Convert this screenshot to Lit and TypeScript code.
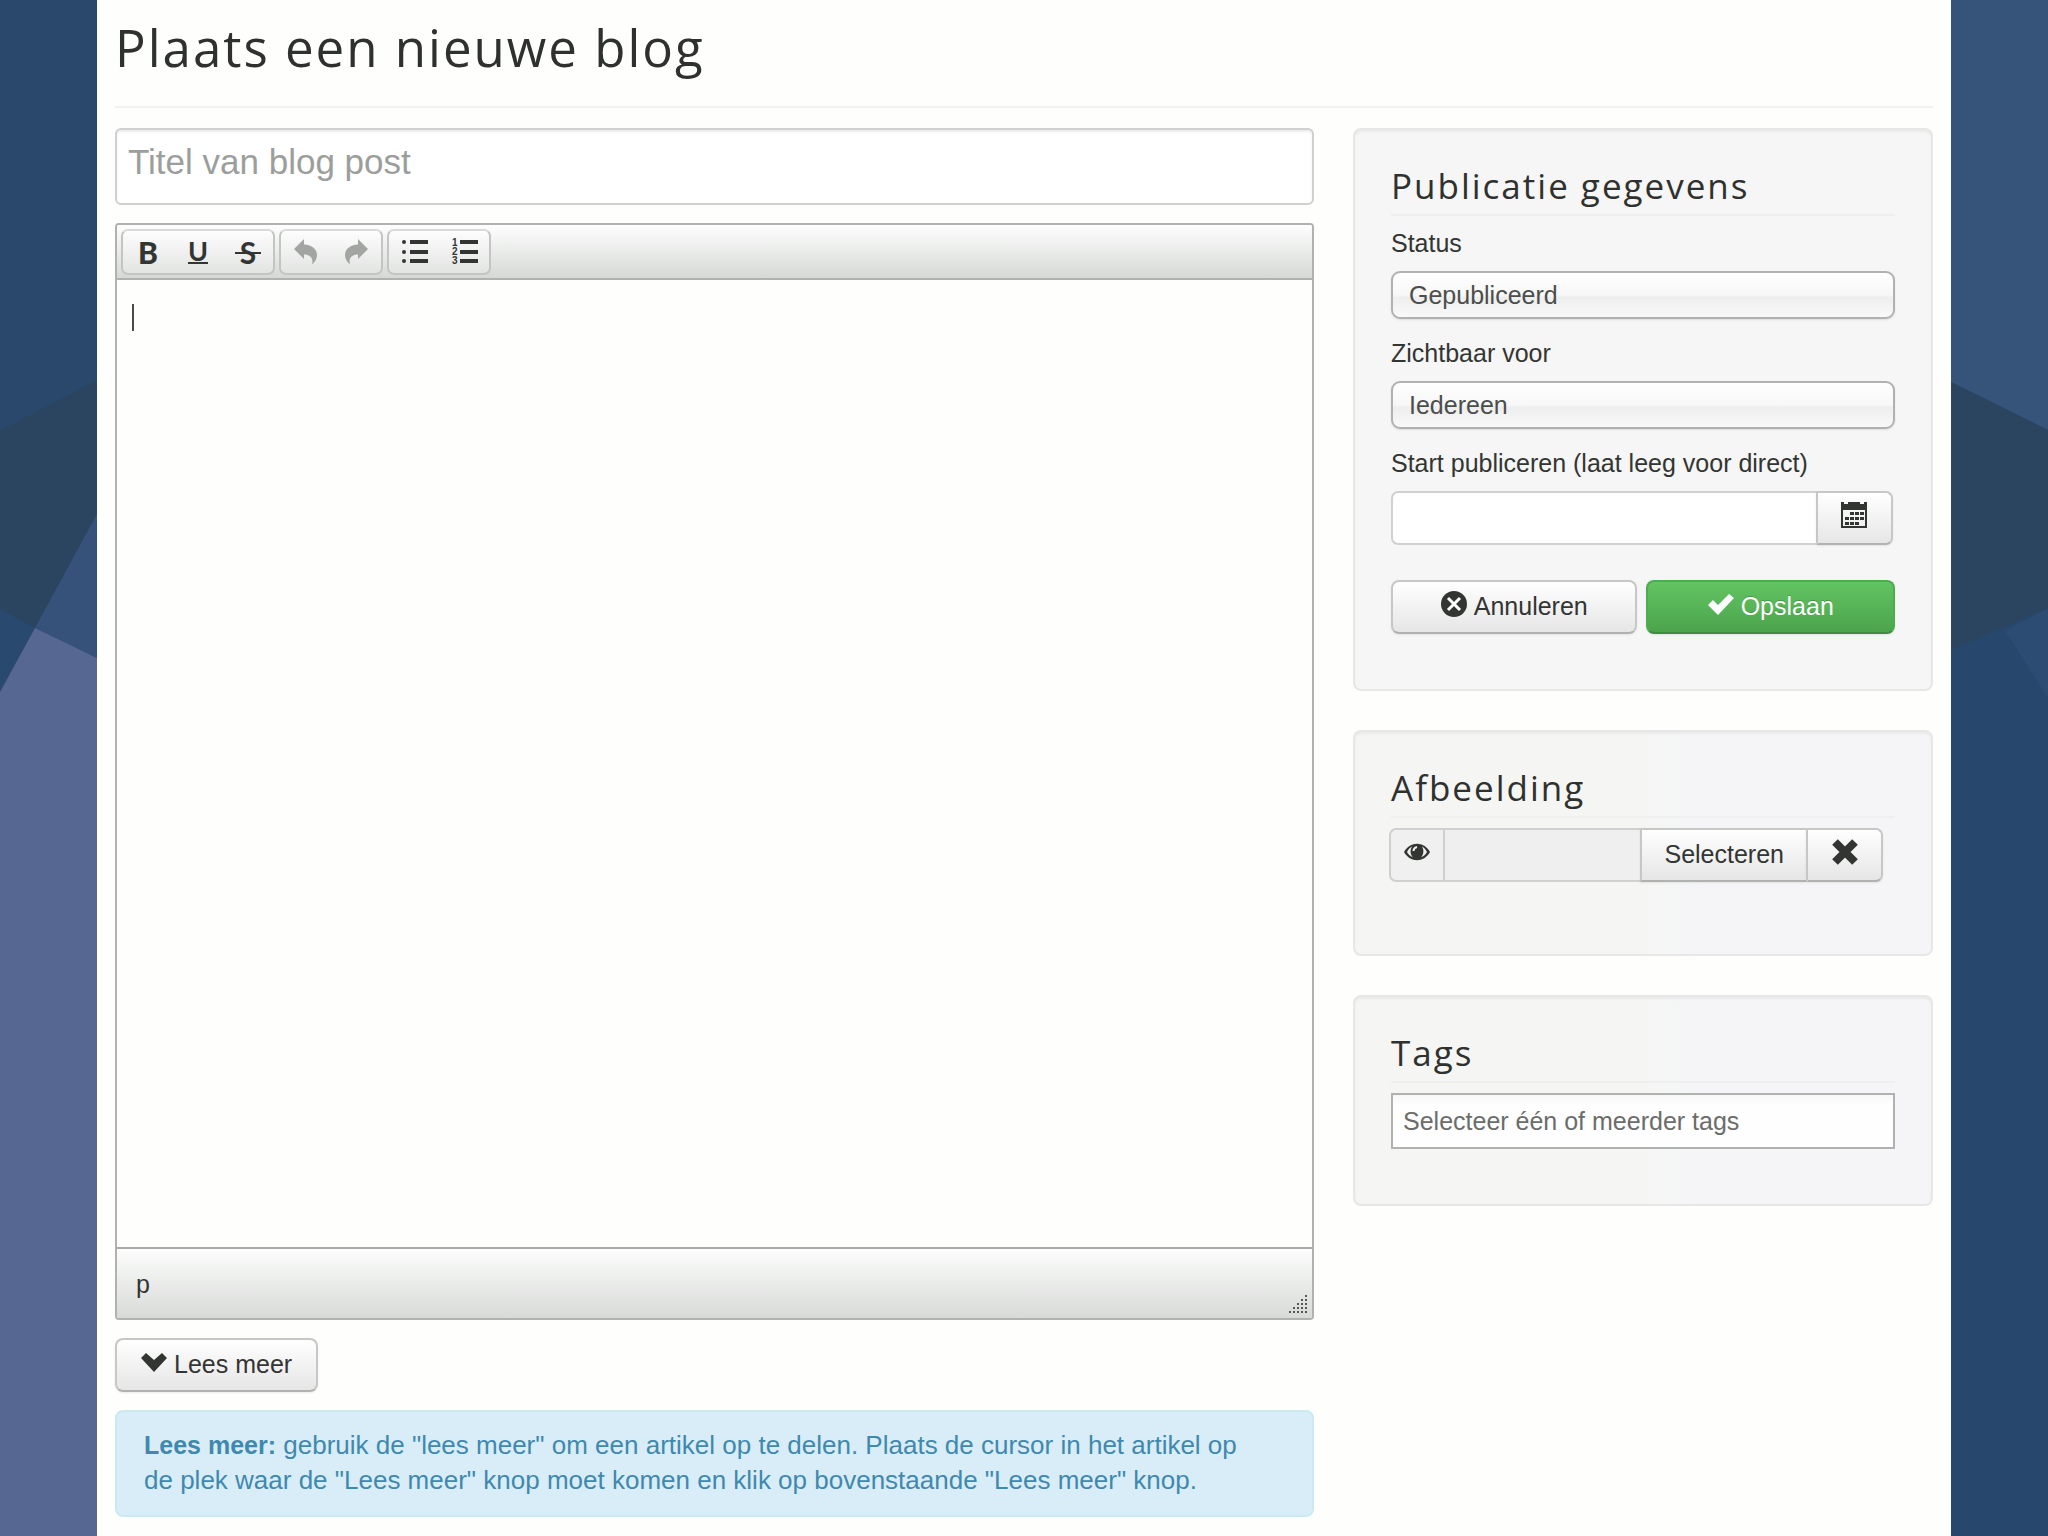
import { LitElement, html, css, svg } from "lit";
import { customElement } from "lit/decorators.js";

const icon = (size: number, body: unknown) => html`
  <svg class="icon" width=${size} height=${size} viewBox="0 0 ${size} ${size}" aria-hidden="true">${body}</svg>
`;

const undoIcon = icon(28, svg`
  <path fill="#a3a5a3" d="M2 11 L12 1 V6.500 C20 7 25 11 25 17 C25 21 23 24 20 26.500 C21.500 21 19 16.500 12 16.500 V21 Z"/>`);
const redoIcon = icon(28, svg`
  <path fill="#a3a5a3" d="M26 11 L16 1 V6.500 C8 7 3 11 3 17 C3 21 5 24 8 26.500 C6.500 21 9 16.500 16 16.500 V21 Z"/>`);
const bulletsIcon = icon(28, svg`
  <g fill="#333533">
    <rect x="10" y="2" width="18" height="4"/><rect x="10" y="12" width="18" height="4"/><rect x="10" y="21" width="18" height="4"/>
    <circle cx="4" cy="4" r="2"/><circle cx="4" cy="14" r="2"/><circle cx="4" cy="23" r="2"/>
  </g>`);
const numbersIcon = icon(28, svg`
  <g fill="#333533">
    <rect x="10" y="2" width="18" height="4"/><rect x="10" y="12" width="18" height="4"/><rect x="10" y="21" width="18" height="4"/>
    <g font-family="Liberation Sans, sans-serif" font-size="10" font-weight="bold">
      <text x="2" y="8">1</text><text x="2" y="17">2</text><text x="2" y="26">3</text>
    </g>
  </g>`);
const gripIcon = icon(20, svg`
  <g fill="#555755">
    ${[0, 1, 2, 3, 4].map((row) =>
      Array.from({ length: row + 1 }, (_, i) => svg`<rect x=${17 - i * 4} y=${1 + row * 4} width="2" height="2"/>`)
    )}
  </g>`);
const chevronIcon = icon(26, svg`
  <path fill="#333533" d="M0 9 L5 4 L13 11 L21 4 L26 9 L13 23 Z"/>`);
const calendarIcon = icon(26, svg`
  <path fill="#333533" fill-rule="evenodd" d="M0 0 H3 V2 H7 V0 H19 V2 H23 V0 H26 V26 H0 Z M2 8 V24 H24 V8 Z"/>
  <g fill="#333533">
    ${[[9, 10], [14, 10], [19, 10], [4, 15], [9, 15], [14, 15], [19, 15], [4, 20], [9, 20], [14, 20]].map(
      ([x, y]) => svg`<rect x=${x} y=${y} width="4" height="3"/>`
    )}
  </g>`);
const cancelIcon = icon(26, svg`
  <circle cx="13" cy="13" r="13" fill="#333533"/>
  <path d="M7 7 L19 19 M19 7 L7 19" stroke="#fff" stroke-width="3" fill="none"/>`);
const checkIcon = icon(26, svg`
  <path fill="#fff" d="M0 14 L5 9 L10 14 L21 3 L26 7 L10 24 Z"/>`);
const eyeIcon = icon(26, svg`
  <path fill="#333533" d="M0 13 C6 2 20 2 26 13 C20 24 6 24 0 13 Z"/>
  <path fill="#eef0ee" d="M3 13 C5 9 7 8 8 7.500 C6 11 6 15 9 18.500 C6 17 4 15 3 13 Z M23 13 C21 9 19 8 18 7.500 C20 11 20 15 17 18.500 C20 17 22 15 23 13 Z"/>
  <path d="M9.500 12 C9.500 9.500 11 8.500 13 8" stroke="#eef0ee" stroke-width="2" fill="none"/>`);
const crossIcon = icon(28, svg`
  <path d="M4 4 L24 24 M24 4 L4 24" stroke="#333533" stroke-width="8" fill="none"/>`);

@customElement("app-root")
export class AppRoot extends LitElement {
  static styles = css`
    :host {
      display: block;
      font-family: "Liberation Sans", Arial, sans-serif;
      font-size: 25px;
      line-height: 35px;
      color: #333533;
    }
    * { box-sizing: border-box; }
    .page {
      display: grid;
      grid-template-columns: 97px minmax(0, 1fr) 97px;
      min-height: 100vh;
      background: #fefffd;
    }
    .side { display: block; width: 100%; height: 1536px; min-height: 100%; }
    .sheet { padding: 12px 18px 18px; }
    h1, h2 {
      margin: 0;
      font-family: "Open Sans", sans-serif;
      font-weight: 500;
      letter-spacing: 2px;
      color: #2f312f;
    }
    h1 {
      font-size: 51px;
      line-height: 70px;
      padding-bottom: 24px;
      margin-bottom: 20px;
      border-bottom: 2px solid #f1f2f1;
    }
    h2 {
      font-size: 35px;
      line-height: 40px;
      padding-bottom: 8px;
      margin-bottom: 10px;
      border-bottom: 2px solid #eeefee;
    }
    .columns {
      display: grid;
      grid-template-columns: 1199fr 580fr;
      column-gap: 39px;
      align-items: start;
    }
    .main { display: flex; flex-direction: column; align-items: stretch; gap: 18px; min-width: 0; }
    .aside { display: flex; flex-direction: column; gap: 39px; min-width: 0; }
    input, select, textarea, button {
      font: inherit;
      color: inherit;
      margin: 0;
      border-radius: 0;
      outline: none;
      min-width: 0;
    }
    .title {
      height: 77px;
      padding: 2px 11px 12px;
      font-size: 35px;
      border: 2px solid #cfd0cf;
      border-radius: 6px;
      background: #fefffe;
      box-shadow: inset 0 2px 2px #ececec;
    }
    .title::placeholder { color: #9c9e9c; opacity: 1; }

    .editor { border: 2px solid #b0b2b0; border-radius: 4px; overflow: hidden; }
    .toolbar {
      display: flex;
      gap: 4px;
      padding: 4px 4px 3px;
      border-bottom: 2px solid #b0b2b0;
      background: linear-gradient(#fdfefd, #d6d8d6);
    }
    .group {
      display: flex;
      height: 46px;
      border: 2px solid #c3c5c3;
      border-top-color: #d9dad9;
      border-radius: 7px;
      background: linear-gradient(#fdfdfd, #e2e4e2);
    }
    .tool {
      display: flex;
      align-items: center;
      justify-content: center;
      width: 50px;
      padding: 0;
      border: 0;
      background: none;
    }
    .icon { display: block; flex: none; }
    .glyph {
      position: relative;
      font-family: Lato, sans-serif;
      font-size: 30px;
      line-height: 28px;
      font-weight: 700;
    }
    .bold { font-weight: 900; }
    .under { line-height: 22px; font-size: 27px; border-bottom: 2px solid #333533; }
    .strike::after {
      content: "";
      position: absolute;
      left: -5px;
      right: -5px;
      top: 14px;
      height: 2px;
      background: #333533;
    }
    .body { position: relative; display: flex; }
    .text {
      flex: 1;
      height: 967px;
      padding: 20px 16px;
      border: 0;
      resize: none;
      background: #fefffd;
      caret-color: transparent;
    }
    .caret { position: absolute; left: 15px; top: 24px; width: 2px; height: 27px; background: #4a4c4a; }
    .footer {
      display: flex;
      align-items: center;
      justify-content: space-between;
      height: 71px;
      padding: 2px 4px 0 19px;
      border-top: 2px solid #a9aba9;
      background: linear-gradient(#fcfdfc, #d8dad8);
    }
    .grip { align-self: flex-end; padding-bottom: 4px; }

    .btn {
      display: flex;
      align-items: center;
      justify-content: center;
      gap: 7px;
      height: 54px;
      padding: 0 22px 2px;
      border: 2px solid #c6c8c6;
      border-bottom-color: #b0b2b0;
      border-radius: 8px;
      background: linear-gradient(#ffffff, #e5e6e5);
      box-shadow: 0 1px 2px rgba(0, 0, 0, 0.08);
    }
    .btn .icon { margin-bottom: 4px; }
    .more { align-self: flex-start; padding: 0 24px 2px; }
    .save {
      color: #fff;
      border-color: #4fab4f;
      border-bottom-color: #3f8c40;
      background: linear-gradient(#62c462, #4ca44c);
      text-shadow: 0 -1px 0 rgba(0, 0, 0, 0.2);
    }
    .notice {
      margin: 0;
      padding: 16px 60px 17px 27px;
      border: 2px solid #c9ebef;
      border-radius: 8px;
      background: #d9edf8;
      color: #3f89ae;
      font-size: 26px;
    }
    .notice strong { font-size: 25px; }

    .panel {
      padding: 36px 36px 55px;
      border: 2px solid #e6e7e6;
      border-radius: 8px;
      background: #f5f6f5;
      box-shadow: inset 0 2px 2px #e9eae9;
    }
    .tinted { background: linear-gradient(to right, #f5f6f4 50%, #f5f5f8 60%); }
    .image-panel { padding-bottom: 72px; }
    .label { display: block; margin-bottom: 10px; }
    .select {
      display: block;
      appearance: none;
      width: 100%;
      height: 48px;
      margin-bottom: 17px;
      padding: 0 16px;
      border: 2px solid #b0b2b0;
      border-radius: 9px;
      background: linear-gradient(#ffffff, #f6f7f6 50%, #edeeed 56%, #f8f9f8);
      box-shadow: 0 1px 2px rgba(0, 0, 0, 0.1);
      color: #4c4e4c;
    }
    .joined { display: flex; }
    .joined .btn { border-radius: 0 7px 7px 0; }
    .joined .btn.middle { border-radius: 0; border-right-width: 0; }
    .date { margin-right: 2px; margin-bottom: 35px; }
    .date .field {
      flex: 1;
      height: 54px;
      padding: 0 12px;
      border: 2px solid #cfd0cf;
      border-right: 0;
      border-radius: 7px 0 0 7px;
      background: #fefffe;
    }
    .date .btn { width: 77px; padding: 0 2px 2px 0; }
    .actions { display: grid; grid-template-columns: 246fr 248fr; gap: 9px; }
    .image { margin: 0 12px 0 -2px; }
    .addon {
      display: flex;
      align-items: center;
      justify-content: center;
      width: 54px;
      height: 54px;
      padding: 0 0 6px;
      border: 2px solid #cfd0cf;
      border-right-width: 0;
      border-radius: 7px 0 0 7px;
      background: #eff0ef;
    }
    .path {
      flex: 1;
      height: 54px;
      padding: 0 12px;
      border: 2px solid #cfd0cf;
      border-right: 0;
      background: #eeefee;
    }
    .clear { width: 77px; }
    .joined .clear { padding: 0 0 2px; }
    .tags {
      display: block;
      width: 100%;
      height: 56px;
      padding: 0 10px;
      border: 2px solid #b0b2b0;
      background: linear-gradient(#f6f7f6, #fefefe 20%);
    }
    .tags::placeholder { color: #6b6d6b; opacity: 1; }
  `;

  render() {
    return html`
      <div class="page">
        <svg class="side" viewBox="0 0 97 1536" preserveAspectRatio="none" aria-hidden="true">
          <rect width="97" height="1536" fill="#29486b" />
          <path d="M0 431 L97 380 V514 L35 628 L0 609 Z" fill="#2b4561" />
          <path d="M0 609 L35 628 L0 692 Z" fill="#29496f" />
          <path d="M97 514 L35 628 L97 658 Z" fill="#36527a" />
          <path d="M0 692 L35 628 L97 658 V1536 H0 Z" fill="#566891" />
        </svg>

        <main class="sheet">
          <h1>Plaats een nieuwe blog</h1>
          <div class="columns">
            <div class="main">
              <input class="title" type="text" placeholder="Titel van blog post" aria-label="Titel van blog post" />

              <div class="editor">
                <div class="toolbar" role="toolbar">
                  <div class="group">
                    <button class="tool" type="button"><span class="glyph bold">B</span></button>
                    <button class="tool" type="button"><span class="glyph under">U</span></button>
                    <button class="tool" type="button"><span class="glyph strike">S</span></button>
                  </div>
                  <div class="group">
                    <button class="tool" type="button" aria-label="Ongedaan maken" disabled>${undoIcon}</button>
                    <button class="tool" type="button" aria-label="Opnieuw" disabled>${redoIcon}</button>
                  </div>
                  <div class="group">
                    <button class="tool" type="button" aria-label="Opsomming">${bulletsIcon}</button>
                    <button class="tool" type="button" aria-label="Genummerde lijst">${numbersIcon}</button>
                  </div>
                </div>
                <div class="body">
                  <textarea class="text" aria-label="Artikel"></textarea>
                  <span class="caret"></span>
                </div>
                <div class="footer"><span>p</span><span class="grip">${gripIcon}</span></div>
              </div>

              <button class="btn more" type="button">${chevronIcon}<span>Lees meer</span></button>

              <p class="notice">
                <strong>Lees meer:</strong> gebruik de "lees meer" om een artikel op te delen. Plaats de cursor in het
                artikel op de plek waar de "Lees meer" knop moet komen en klik op bovenstaande "Lees meer" knop.
              </p>
            </div>

            <aside class="aside">
              <section class="panel">
                <h2>Publicatie gegevens</h2>
                <label class="label" for="status">Status</label>
                <select class="select" id="status"><option>Gepubliceerd</option></select>
                <label class="label" for="visible">Zichtbaar voor</label>
                <select class="select" id="visible"><option>Iedereen</option></select>
                <label class="label" for="start">Start publiceren (laat leeg voor direct)</label>
                <div class="joined date">
                  <input class="field" id="start" type="text" />
                  <button class="btn" type="button" aria-label="Kies datum">${calendarIcon}</button>
                </div>
                <div class="actions">
                  <button class="btn" type="button">${cancelIcon}<span>Annuleren</span></button>
                  <button class="btn save" type="submit">${checkIcon}<span>Opslaan</span></button>
                </div>
              </section>

              <section class="panel tinted image-panel">
                <h2>Afbeelding</h2>
                <div class="joined image">
                  <span class="addon">${eyeIcon}</span>
                  <input class="path" type="text" readonly aria-label="Afbeelding" />
                  <button class="btn middle" type="button">Selecteren</button>
                  <button class="btn clear" type="button" aria-label="Wissen">${crossIcon}</button>
                </div>
              </section>

              <section class="panel tinted">
                <h2>Tags</h2>
                <input class="tags" type="text" placeholder="Selecteer één of meerder tags" aria-label="Tags" />
              </section>
            </aside>
          </div>
        </main>

        <svg class="side" viewBox="0 0 97 1536" preserveAspectRatio="none" aria-hidden="true">
          <rect width="97" height="1536" fill="#365479" />
          <path d="M0 382 L97 430 V1536 H0 Z" fill="#28476c" />
          <path d="M0 382 L97 430 V608 L0 650 Z" fill="#2b4561" />
          <path d="M54 631 L97 608 V698 Z" fill="#2d4c73" />
        </svg>
      </div>
    `;
  }
}
